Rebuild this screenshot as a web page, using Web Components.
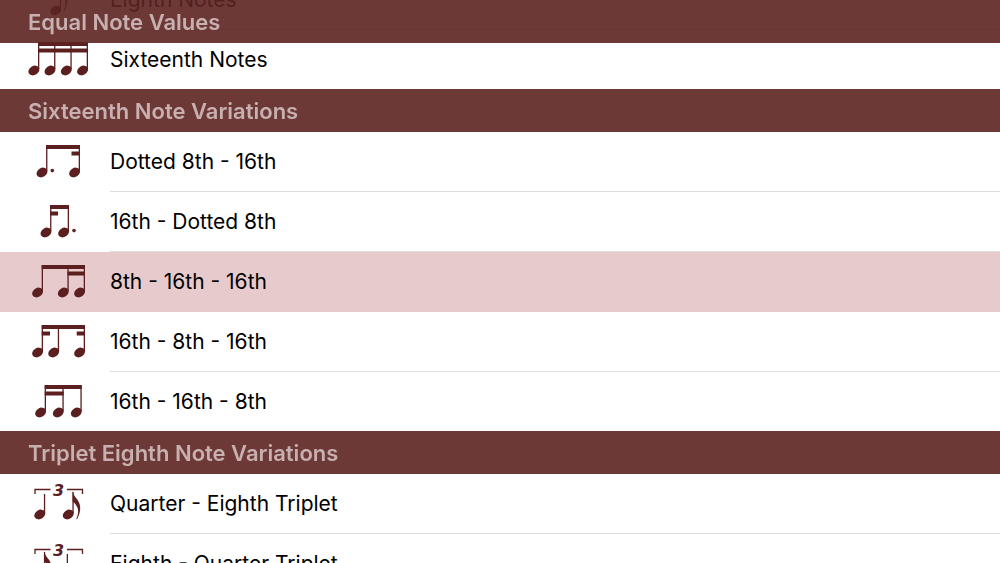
<!DOCTYPE html>
<html lang="en">
<head>
<meta charset="utf-8">
<title>Note Values</title>
<style>
  body { margin: 0; background: #fff; font-family: Inter, "Liberation Sans", sans-serif; }
</style>
</head>
<body>
<rhythm-list>
  <rhythm-section heading="Equal Note Values">
    <rhythm-row icon="eighths">Eighth Notes</rhythm-row>
    <rhythm-row icon="sixteenths">Sixteenth Notes</rhythm-row>
  </rhythm-section>
  <rhythm-section heading="Sixteenth Note Variations">
    <rhythm-row icon="dotted-16">Dotted 8th - 16th</rhythm-row>
    <rhythm-row icon="16-dotted">16th - Dotted 8th</rhythm-row>
    <rhythm-row icon="8-16-16" selected>8th - 16th - 16th</rhythm-row>
    <rhythm-row icon="16-8-16">16th - 8th - 16th</rhythm-row>
    <rhythm-row icon="16-16-8">16th - 16th - 8th</rhythm-row>
  </rhythm-section>
  <rhythm-section heading="Triplet Eighth Note Variations">
    <rhythm-row icon="quarter-eighth">Quarter - Eighth Triplet</rhythm-row>
    <rhythm-row icon="eighth-quarter">Eighth - Quarter Triplet</rhythm-row>
  </rhythm-section>
</rhythm-list>

<script>
  // Each note is a tilted head with a thin stem on its right side.
  const note = (x, top = 13) =>
    `<ellipse cx="${x}" cy="40.5" rx="5.8" ry="4.5" transform="rotate(-32 ${x} 40.5)"/>` +
    `<rect x="${x + 4.1}" y="${top}" width="1.3" height="${39 - top}"/>`;
  const bar = (x1, x2, y = 13) => `<rect x="${x1}" y="${y}" width="${x2 - x1}" height="4"/>`;
  const dot = (x) => `<circle cx="${x}" cy="38.6" r="1.8"/>`;
  const flag = (x, y) =>
    `<path d="M${x} ${y}c.6 4 2.6 5.8 4.6 8.6c3.4 4.8 4.4 10.5-.2 19.6l-.8-.3c2.9-6.8 2.800-12.200-3.600-17.400z"/>`;
  const bracket =
    `<path d="M7 20v-4.500h15.500M39 15.500h15.500v4.500" fill="none" stroke="currentColor" stroke-width="1.300"/>` +
    `<text x="30.500" y="22" text-anchor="middle">3</text>`;

  const ICONS = {
    'eighths': note(27.7) + flag(32, 13),
    'sixteenths': note(5.9) + note(22) + note(38.3) + note(54.6) + bar(10, 60, 12) + bar(10, 60, 18.5),
    'dotted-16': note(14) + note(46.6) + bar(18, 52) + bar(43.5, 52, 19.5) + dot(24.3),
    '16-dotted': note(18) + note(35.6) + bar(22, 41) + bar(22, 30, 19.5) + dot(46),
    '8-16-16': note(9.6) + note(35.3) + note(51.6) + bar(13.7, 57) + bar(39.5, 57, 19.5),
    '16-8-16': note(9.6) + note(25.7) + note(51.6) + bar(13.7, 57) + bar(13.7, 22, 19.5) + bar(48.7, 57, 19.5),
    '16-16-8': note(12.6) + note(30.3) + note(48.3) + bar(16.7, 53.7) + bar(16.7, 35.7, 19.5),
    'quarter-eighth': note(11.8, 20) + note(40.3, 18) + flag(44.7, 17) + bracket,
    'eighth-quarter': note(11.8, 18) + flag(16.2, 17) + note(34.6, 20) + bracket
  };

  class RhythmRow extends HTMLElement {
    connectedCallback() {
      if (this.shadowRoot) return;
      this.attachShadow({ mode: 'open' }).innerHTML = `
        <style>
          :host { display: block; }
          button {
            display: flex; align-items: center; gap: 22px;
            box-sizing: border-box; width: 100%; padding: 0 0 0 28px;
            border: 0; background: none; color: #000;
            font: inherit; font-size: 21px; text-align: left;
          }
          svg { flex: none; width: 60px; height: 59px; margin-bottom: 1px; color: #5c1f1f; fill: currentColor; }
          text { font: italic 700 16px "DejaVu Sans", sans-serif; }
          span { flex: 1; line-height: 59px; border-bottom: 1px solid #dddcde; }
          :host(:last-child) svg { margin-bottom: 0; }
          :host(:last-child) span { border-bottom: 0; }
          :host([selected]) button { background: #e7cacc; }
          :host([selected]) span { border-color: transparent; }
        </style>
        <button type="button" aria-pressed="${this.hasAttribute('selected')}">
          <svg viewBox="0 0 60 59" aria-hidden="true">${ICONS[this.getAttribute('icon')]}</svg>
          <span><slot></slot></span>
        </button>`;
    }
  }

  class RhythmSection extends HTMLElement {
    connectedCallback() {
      if (this.shadowRoot) return;
      this.attachShadow({ mode: 'open' }).innerHTML = `
        <style>
          :host { display: block; }
          h2 {
            position: sticky; top: 0; z-index: 1;
            margin: 0; padding: 2px 28px 0;
            background: rgba(92, 35, 33, .9); color: #c8b0b0;
            font-size: 22px; font-weight: 600; line-height: 41px;
          }
        </style>
        <section><h2></h2><slot></slot></section>`;
      this.shadowRoot.querySelector('h2').textContent = this.getAttribute('heading');
    }
  }

  class RhythmList extends HTMLElement {
    connectedCallback() {
      if (this.shadowRoot) return;
      this.attachShadow({ mode: 'open' }).innerHTML = `
        <style>
          :host { display: block; height: 100vh; overflow-y: auto; scrollbar-width: none; }
        </style>
        <slot></slot>`;
    }
  }

  customElements.define('rhythm-row', RhythmRow);
  customElements.define('rhythm-section', RhythmSection);
  customElements.define('rhythm-list', RhythmList);

  // Open the list part-way down, with the first heading pinned over its rows.
  document.querySelector('rhythm-list').scrollTop = 73;
</script>
</body>
</html>
